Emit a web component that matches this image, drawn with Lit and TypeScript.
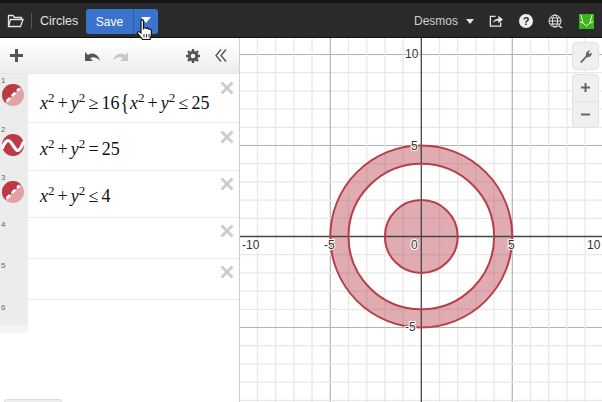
import { LitElement, html, css, svg } from "lit";
import { customElement } from "lit/decorators.js";

const OX = 181.3, OY = 198.5, U = 18.2, W = 362, H = 364;

function grid() {
  const out: unknown[] = [];
  for (let i = -13; i <= 13; i++) {
    const x = OX + i * U, y = OY + i * U;
    const major = i % 5 === 0;
    const c = major ? "#b4b4b4" : "#e8e8e8";
    const w = major ? 1.2 : 1.3;
    if (i !== 0) {
      out.push(svg`<line x1=${x} y1="0" x2=${x} y2=${H} stroke=${c} stroke-width=${w}></line>`);
      out.push(svg`<line x1="0" y1=${y} x2=${W} y2=${y} stroke=${c} stroke-width=${w}></line>`);
    }
  }
  return out;
}

const rows = [
  { n: 1, h: 49, icon: "shade", pad: 19, xTop: 7 },
  { n: 2, h: 48, icon: "wave", pad: 16, xTop: 7 },
  { n: 3, h: 47, icon: "shade", pad: 15, xTop: 6 },
  { n: 4, h: 41, icon: "", pad: 15, xTop: 6 },
  { n: 5, h: 41, icon: "", pad: 15, xTop: 6 },
];

const sup2 = html`<sup>2</sup>`;
const xy = html`<i>x</i>${sup2}<span class="op">+</span><i>y</i>${sup2}`;

@customElement("app-root")
export class AppRoot extends LitElement {
  static styles = css`
    :host { display: block; width: 602px; height: 402px; overflow: hidden; background: #fff; font-family: "Liberation Sans", Arial, sans-serif; position: relative; }
    .top { height: 38px; box-sizing: border-box; background: #2a2a2a; border-top: 3px solid #141414; border-bottom: 1px solid #111; padding-top: 2px; display: flex; align-items: center; color: #e4e4e4; font-size: 12px; }
    .folder { margin-left: 7px; width: 17px; height: 14px; }
    .sep { width: 1px; height: 16px; background: #555; margin: 0 8px 0 7px; }
    .title { width: 46px; font-size: 12.5px; }
    .savegroup { display: flex; height: 25px; border-radius: 3px; overflow: hidden; background: #3a73cd; margin-top: 1px; }
    .save { width: 48px; display: flex; align-items: center; justify-content: center; color: #fff; font-size: 12px; border-right: 1px solid #2c5aa3; box-sizing: border-box; }
    .drop { width: 24px; display: flex; align-items: center; justify-content: center; }
    .drop i { width: 0; height: 0; border-left: 5.5px solid transparent; border-right: 5.5px solid transparent; border-top: 6px solid #fff; margin: -3px 0 0 -1px; }
    .right { margin-left: auto; display: flex; align-items: center; }
    .desmos { color: #cfcfcf; font-size: 12px; margin-right: 8px; }
    .tri { width: 0; height: 0; border-left: 4.5px solid transparent; border-right: 4.5px solid transparent; border-top: 5px solid #e4e4e4; margin-right: 15px; }
    .ico { display: block; }
    .share { margin-right: 16px; }
    .help { margin-right: 15px; }
    .globe { margin-right: 16px; }
    .green { margin-right: 8px; }
    .cursor { position: absolute; left: 136px; top: 19px; width: 17px; height: 22px; }
    .main { display: flex; height: 364px; }
    .panel { width: 240px; flex: none; box-sizing: border-box; border-right: 1px solid #cfcfcf; position: relative; }
    .tools { height: 36px; background: linear-gradient(#fff 12%, #ececec); display: flex; align-items: center; border-bottom: 1px solid #e6e6e6; box-sizing: border-box; }
    .plus { margin-left: 10px; }
    .undo { margin-left: 62px; }
    .redo { margin-left: 11px; }
    .gear { margin-left: 58px; }
    .coll { margin-left: 15px; }
    .row { display: flex; box-sizing: border-box; border-bottom: 1px solid #eaeaea; position: relative; }
    .num { width: 28px; flex: none; background: #ececec; color: #666; font-size: 8px; line-height: 1; padding: 3px 0 0 1px; box-sizing: border-box; position: relative; }
    .badge { position: absolute; left: 1px; top: 9px; }
    .expr { flex: 1; font-family: "Liberation Serif", serif; font-size: 18px; line-height: 20px; color: #111; padding-left: 12px; white-space: nowrap; }
    .expr i { font-style: italic; }
    .expr sup { font-size: 13px; line-height: 0; vertical-align: 7px; }
    .expr .op { margin: 0 3.1px; }
    .brace { display: inline-block; font-size: 24px; line-height: 0; margin: 0 -1px 0 0; transform: scaleX(.75); vertical-align: -1px; }
    .x { position: absolute; right: 5px; }
    .last { width: 28px; height: 33px; background: linear-gradient(#ececec 76%, #f4f4f4 76%); color: #666; font-size: 8px; padding: 3px 0 0 1px; box-sizing: border-box; }
    .graph { position: relative; flex: 1; overflow: hidden; }
    .graph svg { display: block; }
    .lbl { font-size: 12px; font-family: "Liberation Sans", Arial, sans-serif; fill: #333; paint-order: stroke; stroke: #fff; stroke-width: 2px; }
    .ctl { position: absolute; right: 3px; background: #f0f0f0; border: 1px solid #e2e2e2; border-radius: 4px; box-sizing: border-box; width: 27px; display: flex; flex-direction: column; align-items: center; justify-content: center; }
    .wrench { top: 4px; height: 28px; }
    .zoom { top: 36px; height: 54px; }
    .zoom div { height: 27px; display: flex; align-items: center; justify-content: center; width: 100%; color: #666; }
    .zoom div + div { border-top: 1px solid #e2e2e2; }
    .tab { position: absolute; left: 4px; bottom: 0; width: 56px; height: 2px; background: #eee; border: 1px solid #ddd; border-bottom: 0; border-radius: 3px 3px 0 0; }
  `;

  private shadeIcon() {
    return svg`<svg class="badge" width="24" height="24" viewBox="0 0 24 24">
      <circle cx="12" cy="12" r="11" fill="#e0a2a6"></circle>
      <path d="M4.2 19.8A11 11 0 0 1 19.8 4.2Z" fill="#bb3a44"></path>
      <path d="M5.5 18.5L18.5 5.5" stroke="#fff" stroke-width="2.6" stroke-dasharray="5 2.5"></path>
    </svg>`;
  }
  private waveIcon() {
    return svg`<svg class="badge" style="top:10px" width="24" height="24" viewBox="0 0 24 24">
      <circle cx="12" cy="12" r="11" fill="#bb3a44"></circle>
      <path d="M1 16C3.5 9 6 6.5 8.5 8S14 17 16.5 17.5S21 12 23 8.5" fill="none" stroke="#fff" stroke-width="3.2"></path>
    </svg>`;
  }
  private expr(n: number) {
    if (n === 1) return html`${xy}<span class="op">≥</span>16<span class="brace">{</span>${xy}<span class="op">≤</span>25`;
    if (n === 2) return html`${xy}<span class="op">=</span>25`;
    if (n === 3) return html`${xy}<span class="op">≤</span>4`;
    return "";
  }

  render() {
    return html`
      <div class="top">
        <svg class="folder" viewBox="0 0 17 14" fill="none" stroke="#e2e2e2" stroke-width="1.3"><path d="M1.5 12.5V1.5H6L7.5 3.5H14.5V5.5"></path><path d="M1.5 12.5L3.5 5.5H16L13.5 12.5Z"></path></svg>
        <div class="sep"></div>
        <div class="title">Circles</div>
        <div class="savegroup"><div class="save">Save</div><div class="drop"><i></i></div></div>
        <div class="right">
          <span class="desmos">Desmos</span><span class="tri"></span>
          <svg class="ico share" width="14" height="14" viewBox="0 0 15 15" fill="none" stroke="#e6e6e6" stroke-width="1.4"><path d="M7 2.5H1.5V13H12.5V9"></path><path d="M4 9.5C5 6 7.5 5 10 5V2L15 6L10 10V7.3C8 7.3 5.5 8 4 9.5Z" fill="#e6e6e6" stroke="none"></path></svg>
          <svg class="ico help" width="14" height="14" viewBox="0 0 14 14"><circle cx="7" cy="7" r="7" fill="#f0f0f0"></circle><text x="7" y="11" text-anchor="middle" font-size="11" font-weight="700" font-family="Liberation Sans" fill="#2a2a2a">?</text></svg>
          <svg class="ico globe" width="15" height="15" viewBox="0 0 15 15" fill="none" stroke="#e6e6e6" stroke-width="1"><circle cx="7" cy="7" r="6"></circle><ellipse cx="7" cy="7" rx="2.6" ry="6"></ellipse><path d="M1 7H13M2 4H12M2 10H12"></path><path d="M11 12L14 14" stroke-width="1.5"></path></svg>
          <svg class="ico green" width="15" height="15" viewBox="0 0 15 15"><rect width="15" height="15" fill="#3cb21c"></rect><path d="M2 1L4 9L7.5 12L11 9L13 1M1 8L4 9M14 8L11 9" fill="none" stroke="#e8ffe0" stroke-width="1"></path></svg>
        </div>
      </div>
      <div class="main">
        <div class="panel">
          <div class="tools">
            <svg class="plus" width="13" height="13" viewBox="0 0 13 13"><path d="M6.5 0V13M0 6.5H13" stroke="#555" stroke-width="3"></path></svg>
            <svg class="undo" width="16" height="12" viewBox="0 0 16 12"><path d="M0 2V11H8L5.2 8.3C7.5 6.5 11 6.8 15 10.5C13.5 5 8 1.5 3 5Z" fill="#555"></path></svg>
            <svg class="redo" width="16" height="12" viewBox="0 0 16 12"><path d="M16 2V11H8L10.8 8.3C8.5 6.5 5 6.8 1 10.5C2.5 5 8 1.5 13 5Z" fill="#c8c8c8"></path></svg>
            <svg class="gear" width="14" height="14" viewBox="0 0 14 14"><circle cx="7" cy="7" r="3.8" fill="none" stroke="#555" stroke-width="3"></circle><path d="M7 0V14M0 7H14M2 2L12 12M12 2L2 12" stroke="#555" stroke-width="2.4" stroke-dasharray="2.2 9.6 2.2 0" ></path></svg>
            <svg class="coll" width="12" height="13" viewBox="0 0 12 13" fill="none" stroke="#555" stroke-width="1.4"><path d="M6 .5L1 6.5L6 12.5M11 .5L6 6.5L11 12.5"></path></svg>
          </div>
          ${rows.map((r) => html`
            <div class="row" style="height:${r.h}px">
              <div class="num">${r.n}${r.icon === "shade" ? this.shadeIcon() : r.icon === "wave" ? this.waveIcon() : ""}</div>
              <div class="expr" style="padding-top:${r.pad}px">${this.expr(r.n)}</div>
              <svg class="x" style="top:${r.xTop}px" width="14" height="14" viewBox="0 0 14 14"><path d="M1.5 1.5L12.5 12.5M12.5 1.5L1.5 12.5" stroke="#cdcdcd" stroke-width="3"></path></svg>
            </div>`)}
          <div class="last">6</div>
          <div class="tab"></div>
        </div>
        <div class="graph">
          <svg width="362" height="364" viewBox="0 0 362 364">
            ${grid()}
            <path fill-rule="evenodd" fill="#b83a46" fill-opacity=".42" d="M${OX - 5 * U} ${OY}a${5 * U} ${5 * U} 0 1 0 ${10 * U} 0a${5 * U} ${5 * U} 0 1 0 ${-10 * U} 0ZM${OX - 4 * U} ${OY}a${4 * U} ${4 * U} 0 1 0 ${8 * U} 0a${4 * U} ${4 * U} 0 1 0 ${-8 * U} 0Z"></path>
            <circle cx=${OX} cy=${OY} r=${2 * U} fill="#b83a46" fill-opacity=".42"></circle>
            <line x1=${OX} y1="0" x2=${OX} y2=${H} stroke="#444" stroke-width="1.3"></line>
            <line x1="0" y1=${OY} x2=${W} y2=${OY} stroke="#444" stroke-width="1.3"></line>
            <g fill="none" stroke="#b5404a" stroke-width="2">
              <circle cx=${OX} cy=${OY} r=${5 * U}></circle>
              <circle cx=${OX} cy=${OY} r=${4 * U}></circle>
              <circle cx=${OX} cy=${OY} r=${2 * U}></circle>
            </g>
            <text class="lbl" x="2" y="211">-10</text>
            <text class="lbl" x="84" y="211">-5</text>
            <text class="lbl" x="171" y="211">0</text>
            <text class="lbl" x="268" y="211">5</text>
            <text class="lbl" x="347" y="211">10</text>
            <text class="lbl" x="165" y="20">10</text>
            <text class="lbl" x="171" y="112">5</text>
            <text class="lbl" x="165" y="293">-5</text>
          </svg>
          <div class="ctl wrench"><svg width="14" height="14" viewBox="0 0 14 14"><path d="M1 13L7 6.5C6.5 3.5 8.5 1 11.5 1.5L9.5 3.5L10.5 5L12.5 3.5C13.5 6.5 10.5 9 8 8L2.5 14Z" fill="#666"></path></svg></div>
          <div class="ctl zoom"><div><svg width="11" height="11" viewBox="0 0 11 11"><path d="M5.5 1V10M1 5.5H10" stroke="#666" stroke-width="2"></path></svg></div><div><svg width="11" height="11" viewBox="0 0 11 11"><path d="M1 5.5H10" stroke="#666" stroke-width="2"></path></svg></div></div>
        </div>
      </div>
      <svg class="cursor" viewBox="0 0 17 22"><path d="M5 2C5 .6 7.5 .6 7.5 2V9.5C8.5 8.5 10 8.5 10.5 9.5C11.5 9 12.5 9.3 13 10.3C14 10 15.5 10.5 15.5 12.5C15.5 15 15.2 18 14 20.5H6.5L1.5 14.5C.6 13 2.5 11.7 5 14Z" fill="#fff" stroke="#111" stroke-width="1.2"></path><path d="M8 15V18.5M10.5 15V18.5M13 15V18.5" stroke="#111" stroke-width=".9"></path></svg>
    `;
  }
}
